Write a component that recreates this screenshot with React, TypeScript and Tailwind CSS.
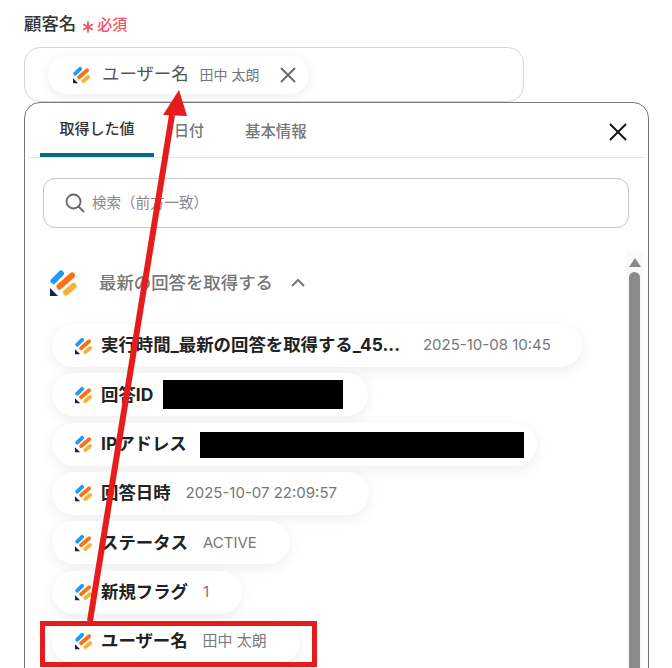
const Logo = ({ size = 18 }: { size?: number }) => {
  return (
    <svg width={size} height={size} viewBox="0 0 28 28" className="shrink-0">
      <path d="M3.5 12 L11 4.5" stroke="#1e9bf8" strokeWidth="6" strokeLinecap="round" />
      <path d="M9.5 17.5 L22 6.5" stroke="#f97316" strokeWidth="6" strokeLinecap="round" />
      <path d="M16 23.5 L23.5 17" stroke="#fbb034" strokeWidth="6" strokeLinecap="round" />
      <path d="M0 19 L8 27 L0 27 Z" fill="#16235a" />
    </svg>
  );
};

interface PillProps {
  label: string;
  value?: string;
  width: string;
  mask?: string;
  valueGap?: string;
}

const Pill = ({ label, value, width, mask, valueGap = "ml-[15px]" }: PillProps) => {
  return (
    <div
      className={`flex h-[43px] items-center rounded-full bg-white pl-[23px] shadow-[0_4px_14px_rgba(0,0,0,0.07)] ${width}`}
    >
      <Logo />
      <span className="ml-[8px] whitespace-nowrap text-[17.4px] font-bold text-[#222]">{label}</span>
      {value && <span className={`whitespace-nowrap text-[15px] text-[#777] ${valueGap}`}>{value}</span>}
      {mask && <div className={`bg-black ${mask}`} />}
    </div>
  );
};

const Arrow = () => {
  return (
    <svg width="672" height="668" className="absolute left-0 top-0 pointer-events-none">
      <path d="M90 621 L172 115" stroke="#e61c1c" strokeWidth="6" />
      <polygon points="179,90 163,115 187,116" fill="#e61c1c" />
    </svg>
  );
};

export default function App() {
  return (
    <div className="relative h-[668px] w-[672px] overflow-hidden bg-white font-['Inter','Noto_Sans_CJK_JP',sans-serif]">
      <div className="flex h-[47px] items-start px-6 pt-[12px]">
        <span className="text-[17.4px] font-medium leading-[24px] text-[#333]">顧客名</span>
        <svg width="12" height="12" viewBox="0 0 12 12" className="ml-[6px] mt-[9px]">
          <path d="M6 0.5 V11.5 M1.2 3.2 L10.8 8.8 M10.8 3.2 L1.2 8.8" stroke="#f4506a" strokeWidth="1.8" />
        </svg>
        <span className="ml-[3px] text-[15px] font-medium leading-[26px] text-[#f4506a]">必須</span>
      </div>

      <div className="ml-6 flex h-[55px] w-[500px] items-center rounded-2xl border border-[#d3d6de] bg-white pl-[23px]">
        <div className="flex h-[38px] w-[261px] items-center rounded-full bg-white pl-[25px] shadow-[0_3px_12px_rgba(0,0,0,0.08)]">
          <Logo />
          <span className="ml-[11px] whitespace-nowrap text-[17.4px] text-[#555]">ユーザー名</span>
          <span className="ml-[11px] whitespace-nowrap text-sm text-[#777]">田中 太朗</span>
          <svg width="18" height="18" viewBox="0 0 18 18" className="ml-[19px]">
            <path d="M2 2 L16 16 M16 2 L2 16" stroke="#666" strokeWidth="1.9" />
          </svg>
        </div>
      </div>

      <div className="relative ml-6 h-[600px] w-[625px] rounded-t-2xl border border-[#777] bg-white">
        <div className="mx-[3px] flex h-[55px] items-end border-b border-[#e2e4e8] pl-3">
          <div className="flex h-[54px] w-[114px] items-center justify-center border-b-[4px] border-[#0b6a86] pt-[3px] text-[15px] font-medium text-[#333]">
            取得した値
          </div>
          <div className="ml-[5px] flex h-[54px] w-[60px] items-center justify-center pt-[3px] text-[15px] font-medium text-[#777]">
            日付
          </div>
          <div className="ml-[11px] flex h-[54px] items-center pl-[15px] pt-[3px] text-[15.4px] font-medium text-[#777]">
            基本情報
          </div>
          <svg width="20" height="20" viewBox="0 0 20 20" className="mb-[15px] ml-auto mr-[17px]">
            <path d="M2 2 L18 18 M18 2 L2 18" stroke="#111" strokeWidth="1.9" />
          </svg>
        </div>

        <div className="mx-[18px] mt-5 flex h-[50px] w-[586px] items-center rounded-xl border border-[#c8c8c8] pl-[21px]">
          <svg width="20" height="20" viewBox="0 0 20 20" className="shrink-0">
            <circle cx="8.5" cy="8.5" r="7" fill="none" stroke="#666" strokeWidth="1.8" />
            <path d="M13.5 13.5 L19 19" stroke="#666" strokeWidth="1.8" />
          </svg>
          <span className="ml-[7px] text-[14.5px] text-[#888]">検索（前方一致）</span>
        </div>

        <div className="ml-[25px] mt-[23px] flex h-[64px] items-center">
          <Logo size={28} />
          <span className="ml-[21px] text-[17.4px] font-medium text-[#777]">最新の回答を取得する</span>
          <svg width="14" height="10" viewBox="0 0 14 10" className="ml-[18px]">
            <path d="M1 8 L7 2 L13 8" fill="none" stroke="#777" strokeWidth="2" />
          </svg>
        </div>

        <div className="ml-[27px] mt-[9px] flex flex-col gap-[6.33px]">
          <Pill
            label="実行時間_最新の回答を取得する_45..."
            value="2025-10-08 10:45"
            valueGap="ml-[23px]"
            width="w-[530px]"
          />
          <Pill label="回答ID" mask="ml-[10px] h-[29px] w-[180px]" width="w-[316px]" />
          <Pill label="IPアドレス" mask="ml-[13px] mt-[2px] h-[26px] w-[324px]" width="w-[485px]" />
          <Pill label="回答日時" value="2025-10-07 22:09:57" width="w-[317px]" />
          <Pill label="ステータス" value="ACTIVE" width="w-[238px]" />
          <Pill label="新規フラグ" value="1" width="w-[190px]" />
          <Pill label="ユーザー名" value="田中 太朗" width="w-[248px]" />
        </div>

        <div className="absolute left-[601px] top-[148px] flex h-[420px] w-[17px] flex-col items-center bg-[#fafafa] pt-[7px]">
          <div className="h-0 w-0 border-x-[6px] border-b-[9px] border-x-transparent border-b-[#8a8a8a]" />
          <div className="mt-[5px] h-[400px] w-[11px] rounded-t-full bg-[#8a8a8a]" />
        </div>
      </div>

      <div className="absolute left-[40px] top-[621px] h-[46px] w-[277px] border-[5px] border-[#e61c1c]" />
      <Arrow />
    </div>
  );
}
